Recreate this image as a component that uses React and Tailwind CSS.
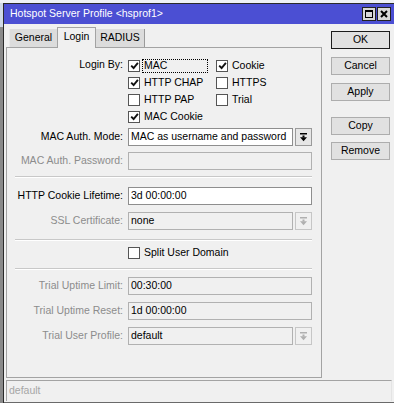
const font = "font-['Liberation_Sans',Arial,sans-serif]";

function Check({ checked }) {
  return (
    <span className="w-[12px] h-[12px] border border-[#555] bg-white flex items-center justify-center shrink-0">
      {checked && (
        <svg width="9" height="9" viewBox="0 0 9 9">
          <path d="M1.2 4.6 L3.6 7 L7.9 1.8" fill="none" stroke="#111" strokeWidth="1.9" />
        </svg>
      )}
    </span>
  );
}

function DropArrow({ disabled }) {
  const c = disabled ? '#b0b0b0' : '#000';
  return (
    <svg width="7" height="9" viewBox="0 0 7 9">
      <rect x="0" y="0" width="7" height="1.5" fill={c} />
      <rect x="2.5" y="2.5" width="2" height="2" fill={c} />
      <path d="M0 4.3 H7 L3.5 8.3 Z" fill={c} />
    </svg>
  );
}

function Label({ children, disabled }) {
  return (
    <div className={`w-[116px] shrink-0 text-right whitespace-nowrap ${disabled ? 'text-[#8c8c8c]' : 'text-black'}`}>
      {children}
    </div>
  );
}

function TextRow({ label, value, disabled, mt }) {
  return (
    <div className={`flex items-center h-[18px] gap-[5px] ${mt}`}>
      <Label disabled={disabled}>{label}</Label>
      <div
        className={`w-[184px] h-[18px] border pl-[2px] flex items-center whitespace-nowrap ${
          disabled ? 'bg-[#f0f0f0] border-[#b1b1b1]' : 'bg-white border-[#8e8e8e]'
        }`}
      >
        {value}
      </div>
    </div>
  );
}

function SelectRow({ label, value, disabled, mt }) {
  return (
    <div className={`flex items-center h-[18px] gap-[5px] ${mt}`}>
      <Label disabled={disabled}>{label}</Label>
      <div className="flex gap-[2px]">
        <div
          className={`w-[165px] h-[18px] border pl-[2px] flex items-center whitespace-nowrap overflow-hidden ${
            disabled ? 'bg-[#f0f0f0] border-[#b1b1b1]' : 'bg-white border-[#8e8e8e]'
          }`}
        >
          {value}
        </div>
        <div
          className={`w-[17px] h-[18px] border flex items-center justify-center ${
            disabled ? 'bg-[#f0f0f0] border-[#c6c6c6]' : 'bg-[#e6e6e6] border-[#9a9a9a]'
          }`}
        >
          <DropArrow disabled={disabled} />
        </div>
      </div>
    </div>
  );
}

function Separator({ mt }) {
  return <div className={`ml-[8px] w-[297px] h-[2px] border-t border-[#c8c8c8] border-b border-b-white ${mt}`} />;
}

function CheckItem({ checked, children, focused, width }) {
  return (
    <div className={`flex items-center ${width}`}>
      <Check checked={checked} />
      {focused ? (
        <span className="ml-[2px] w-[66px] h-[14px] pl-[1px] border border-dotted border-black flex items-center">{children}</span>
      ) : (
        <span className="ml-[4px] whitespace-nowrap">{children}</span>
      )}
    </div>
  );
}

function Button({ children, primary, mt }) {
  return (
    <div
      className={`w-[59px] h-[18px] flex items-center justify-center bg-[#e1e1e1] border ${
        primary ? 'border-[#1c1c1c]' : 'border-[#adadad]'
      } ${mt}`}
    >
      {children}
    </div>
  );
}

export default function App() {
  const loginBy = [
    [{ t: 'MAC', c: true, f: true }, { t: 'Cookie', c: true }],
    [{ t: 'HTTP CHAP', c: true }, { t: 'HTTPS', c: false }],
    [{ t: 'HTTP PAP', c: false }, { t: 'Trial', c: false }],
    [{ t: 'MAC Cookie', c: true }],
  ];

  return (
    <div className={`w-[394px] h-[403px] overflow-hidden bg-[#e9edf2] flex flex-col text-[10.5px] text-black ${font}`}>
      <div className="h-[3px] shrink-0 bg-[#eef1f5]" />
      <div className="flex flex-1 min-h-0">
        {/* window behind */}
        <div className="w-[3px] shrink-0 flex flex-col">
          <div className="h-[24px] bg-[#cfd9e6]" />
          <div className="flex-1 bg-[#8a8a8a]" />
        </div>

        {/* dialog */}
        <div className="flex-1 flex flex-col border-l border-t border-[#2a2a2a] bg-[#f0f0f0]">
          {/* title bar */}
          <div className="h-[20px] shrink-0 bg-[#4b4fd3] flex items-center pl-[6px] pr-[3px] text-white">
            <span className="whitespace-nowrap">Hotspot Server Profile &lt;hsprof1&gt;</span>
            <div className="ml-auto flex gap-[1px]">
              <div className="w-[14px] h-[14px] bg-[#d8d8d8] border border-[#222] flex items-center justify-center">
                <div className="w-[8px] h-[8px] border border-black border-t-2" />
              </div>
              <div className="w-[14px] h-[14px] bg-[#d8d8d8] border border-[#222] flex items-center justify-center">
                <svg width="8" height="8" viewBox="0 0 8 8">
                  <path d="M1 1 L7 7 M7 1 L1 7" stroke="#000" strokeWidth="2" />
                </svg>
              </div>
            </div>
          </div>

          {/* body */}
          <div className="flex flex-col flex-1 min-h-0">
            <div className="h-[356px] shrink-0 flex">
              {/* tabs + panel */}
              <div className="pl-[2px] pt-[3px] flex flex-col">
                <div className="h-[20px] flex items-end pl-[3px]">
                  <div className="w-[48px] h-[18px] bg-[#dcdcdc] border-l border-[#e8e8e8] flex items-center justify-center">
                    General
                  </div>
                  <div className="relative z-10 -mb-px w-[39px] h-[21px] bg-[#f0f0f0] border border-b-0 border-[#a3a3a3] flex items-center justify-center pb-[3px]">
                    Login
                  </div>
                  <div className="w-[49px] h-[18px] bg-[#dcdcdc] border-r border-[#9a9a9a] flex items-center justify-center">
                    RADIUS
                  </div>
                </div>

                <div className="w-[316px] h-[331px] border border-[#a3a3a3] flex flex-col">
                  {/* Login By */}
                  <div className="flex gap-[5px] mt-[9px]">
                    <Label>Login By:</Label>
                    <div className="flex flex-col">
                      {loginBy.map((row, i) => (
                        <div key={i} className="flex h-[17px] items-center">
                          {row.map((it, j) => (
                            <CheckItem key={j} checked={it.c} focused={it.f} width={j === 0 ? 'w-[88px]' : ''}>
                              {it.t}
                            </CheckItem>
                          ))}
                        </div>
                      ))}
                    </div>
                  </div>

                  <SelectRow label="MAC Auth. Mode:" value="MAC as username and password" mt="mt-[3px]" />
                  <TextRow label="MAC Auth. Password:" value="" disabled mt="mt-[6px]" />
                  <Separator mt="mt-[6px]" />
                  <TextRow label="HTTP Cookie Lifetime:" value="3d 00:00:00" mt="mt-[9px]" />
                  <SelectRow label="SSL Certificate:" value="none" disabled mt="mt-[7px]" />
                  <Separator mt="mt-[9px]" />

                  <div className="flex items-center h-[17px] gap-[5px] mt-[3px]">
                    <div className="w-[116px] shrink-0" />
                    <CheckItem checked={false}>Split User Domain</CheckItem>
                  </div>

                  <Separator mt="mt-[7px]" />
                  <TextRow label="Trial Uptime Limit:" value="00:30:00" disabled mt="mt-[7px]" />
                  <TextRow label="Trial Uptime Reset:" value="1d 00:00:00" disabled mt="mt-[7px]" />
                  <SelectRow label="Trial User Profile:" value="default" disabled mt="mt-[7px]" />
                </div>
              </div>

              {/* buttons */}
              <div className="ml-[9px] flex flex-col">
                <Button primary mt="mt-[7px]">OK</Button>
                <Button mt="mt-[8px]">Cancel</Button>
                <Button mt="mt-[8px]">Apply</Button>
                <Button mt="mt-[16px]">Copy</Button>
                <Button mt="mt-[7px]">Remove</Button>
              </div>
            </div>

            {/* status bar */}
            <div className="ml-[2px] mr-[2px] h-[21px] shrink-0 border-l border-t border-r border-[#a3a3a3] border-r-[#e4e4e4] flex items-center pl-[2px] text-[#a6a6a6]">
              default
            </div>
            <div className="h-[1px] shrink-0" />
            <div className="h-[1px] shrink-0 bg-[#6a6a6a]" />
          </div>
        </div>
      </div>
    </div>
  );
}
